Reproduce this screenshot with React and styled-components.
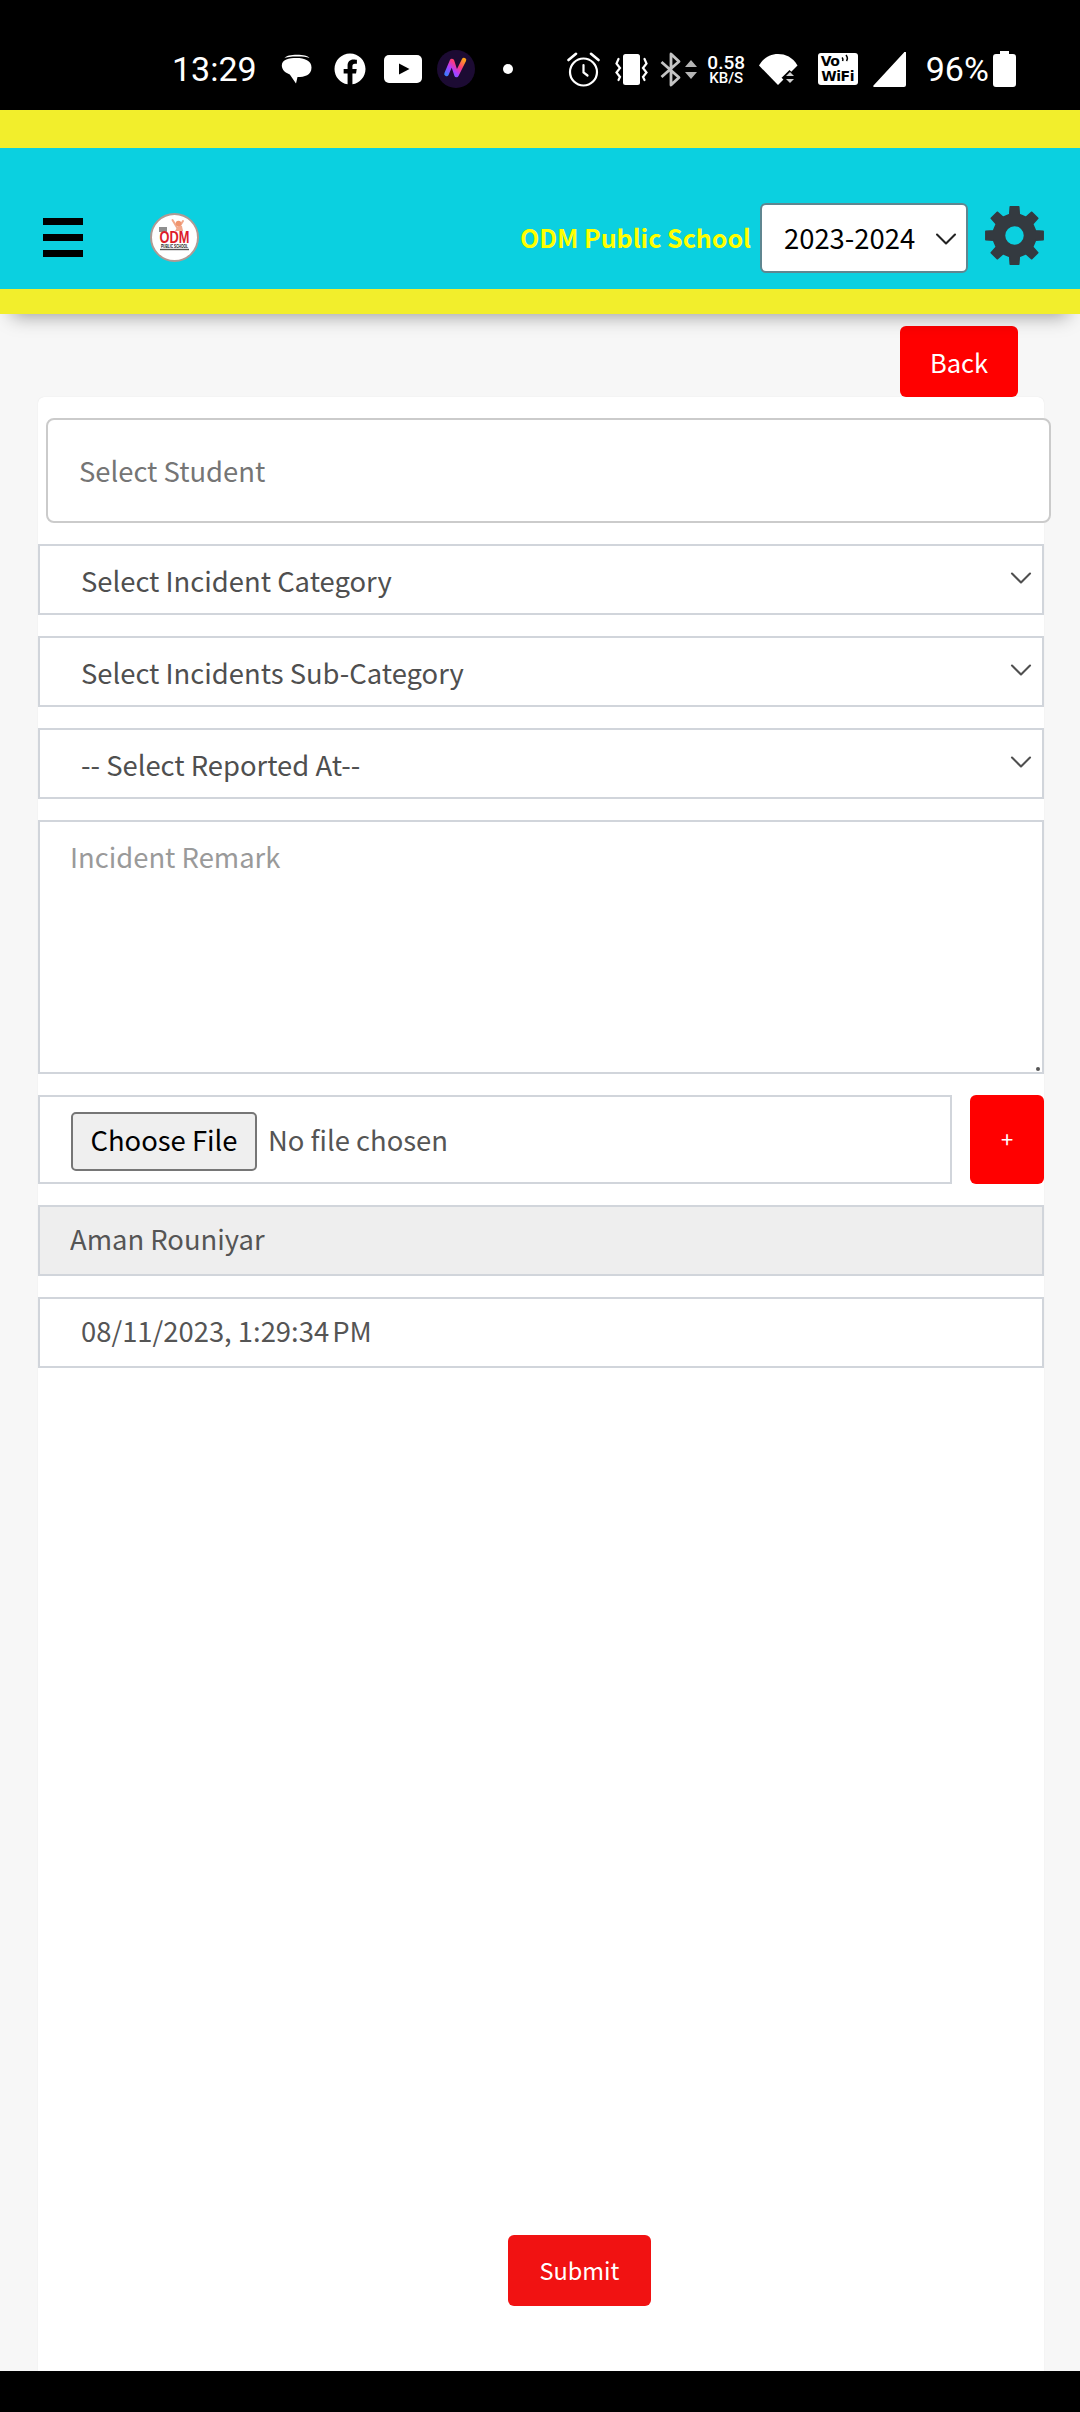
import styled, { createGlobalStyle } from "styled-components";
import { FaFacebook } from "react-icons/fa";

const Global = createGlobalStyle`
    html, body {
        margin: 0;
        padding: 0;
        background: #f7f7f7;
    }
    * {
        box-sizing: border-box;
    }
`;

const UI_FONT = `"Noto Sans CJK SC", "Noto Sans", sans-serif`;

const Screen = styled.div`
    width: 1080px;
    height: 2412px;
    display: flex;
    flex-direction: column;
    overflow: hidden;
    font-family: ${UI_FONT};
`;

// android status bar
const StatusBar = styled.div`
    height: 110px;
    flex: none;
    background: #000;
    color: #fff;
    display: flex;
    align-items: center;
    padding: 30px 0 2px 172px;
    font-family: Roboto, sans-serif;
`;
const StatusText = styled.span`
    font-size: 34px;
    line-height: 40px;
    margin-left: ${p => p.$ml || 0}px;
`;
const Slot = styled.span`
    display: flex;
    flex: none;
    margin-left: ${p => p.$ml || 0}px;
`;
const Speed = styled.span`
    display: flex;
    flex-direction: column;
    align-items: center;
    width: 41px;
    margin-left: 9px;
    font-weight: 500;
`;
const SpeedValue = styled.span`
    font-size: 19px;
    line-height: 17px;
`;
const SpeedUnit = styled.span`
    font-size: 15px;
    line-height: 14px;
`;
const VoWifi = styled.span`
    width: 40px;
    height: 32px;
    margin-left: 20px;
    flex: none;
    background: #fff;
    border-radius: 3px;
    color: #000;
    font-family: "DejaVu Sans", sans-serif;
    font-weight: 700;
    display: flex;
    flex-direction: column;
    align-items: center;
    font-size: 14px;
    line-height: 15px;
    padding-top: 1px;
    letter-spacing: -0.5px;
`;
const VoLine = styled.span`
    display: flex;
    align-items: flex-start;
    gap: 2px;
    width: 100%;
    padding-left: 3px;
`;

const TopStripe = styled.div`
    height: 38px;
    flex: none;
    background: #f2ee2c;
`;
const HeaderWrap = styled.div`
    flex: none;
    position: relative;
    z-index: 2;
    box-shadow: 0 14px 18px -12px rgba(0, 0, 0, 0.38);
`;
const Header = styled.header`
    height: 141px;
    background: #0bd0e0;
    display: flex;
    align-items: center;
    padding: 38px 35px 0 43px;
`;
const BottomStripe = styled.div`
    height: 25px;
    background: #f2ee2c;
`;
const Burger = styled.div`
    width: 40px;
    display: flex;
    flex-direction: column;
    gap: 9px;
`;
const BurgerBar = styled.span`
    height: 7px;
    background: #000;
`;
const LogoBox = styled.div`
    width: 49px;
    height: 49px;
    margin-left: 67px;
    flex: none;
`;
const SchoolName = styled.span`
    margin: 0 0 2px auto;
    color: #ffff00;
    font-size: 25px;
    line-height: 36px;
    font-weight: 700;
    white-space: nowrap;
`;
const YearWrap = styled.div`
    position: relative;
    width: 208px;
    height: 70px;
    margin-left: 9px;
    flex: none;
`;
const YearSelect = styled.select`
    appearance: none;
    width: 100%;
    height: 100%;
    background: #fff;
    border: 2px solid #5f8690;
    border-radius: 6px;
    padding: 0 0 2px 22px;
    color: #000;
    font-family: ${UI_FONT};
    font-size: 27.4px;
`;
const GearBox = styled.span`
    display: flex;
    margin-left: 16px;
    margin-top: -4px;
`;

const Main = styled.main`
    flex: 1;
    min-height: 0;
    display: flex;
    flex-direction: column;
`;
const BackRow = styled.div`
    display: flex;
    justify-content: flex-end;
    padding: 12px 62px 0 0;
`;
const RedButton = styled.button`
    border: 0;
    background: ${p => p.$bg || "#ff0000"};
    color: #fff;
    border-radius: 6px;
    font-family: ${UI_FONT};
    font-size: ${p => p.$size || 26}px;
    padding: 0 0 ${p => p.$lift || 0}px;
    width: ${p => p.$w}px;
    height: ${p => p.$h}px;
    flex: none;
`;
const Card = styled.section`
    flex: 1;
    width: 1006px;
    margin-left: 38px;
    background: #fff;
    border-radius: 6px 6px 0 0;
    padding: 21px 0 65px;
    display: flex;
    flex-direction: column;
    gap: 21px;
    box-shadow: 0 0 1px rgba(0, 0, 0, 0.12);
`;
const StudentInput = styled.input`
    display: block;
    width: 1005px;
    height: 105px;
    margin-left: 8px;
    flex: none;
    border: 2px solid #cbcbcb;
    border-radius: 8px;
    padding: 0 0 2px 31px;
    font-family: ${UI_FONT};
    font-size: 27.4px;
    background: #fff;
    &::placeholder {
        color: #757575;
        opacity: 1;
    }
`;
const SelectWrap = styled.div`
    position: relative;
    height: 71px;
    flex: none;
`;
const FieldSelect = styled.select`
    appearance: none;
    width: 100%;
    height: 100%;
    border: 2px solid #d1d5db;
    border-radius: 0;
    background: #fff;
    color: #4f4f4f;
    padding: 0 0 0 41px;
    font-family: ${UI_FONT};
    font-size: 27.4px;
`;
const Chevron = styled.svg`
    position: absolute;
    right: ${p => p.$right}px;
    top: ${p => p.$top}px;
    pointer-events: none;
`;
const RemarkWrap = styled.div`
    position: relative;
    height: 254px;
    flex: none;
`;
const RemarkBox = styled.textarea`
    display: block;
    width: 100%;
    height: 100%;
    border: 2px solid #d1d5db;
    border-radius: 0;
    padding: 14px 30px;
    font-family: ${UI_FONT};
    font-size: 27.4px;
    line-height: 40px;
    resize: none;
    &::placeholder {
        color: #9a9a9a;
        opacity: 1;
    }
`;
const ResizeMark = styled.span`
    position: absolute;
    right: 4px;
    bottom: 3px;
    width: 4px;
    height: 4px;
    border-radius: 50%;
    background: #555;
`;
const FileRow = styled.div`
    display: flex;
    justify-content: space-between;
    flex: none;
`;
const FileInput = styled.input`
    width: 914px;
    height: 89px;
    border: 2px solid #d1d5db;
    padding: 15px 31px;
    color: #555;
    font-family: ${UI_FONT};
    font-size: 27.4px;
    background: #fff;
    &::file-selector-button {
        width: 186px;
        height: 59px;
        margin-right: 11px;
        padding: 0 0 5px;
        border: 2px solid #767676;
        border-radius: 5px;
        background: #efefef;
        color: #000;
        font-family: ${UI_FONT};
        font-size: 27.4px;
    }
`;
const TextField = styled.input`
    display: block;
    height: 71px;
    flex: none;
    border: 2px solid #d1d5db;
    border-radius: 0;
    padding: 0 0 5px ${p => p.$pad}px;
    color: #555;
    background: ${p => p.$bg || "#fff"};
    font-family: ${UI_FONT};
    font-size: 27.4px;
`;
const SubmitRow = styled.div`
    margin-top: auto;
    padding-left: 470px;
`;
const NavBar = styled.div`
    height: 41px;
    flex: none;
    background: #000;
`;

const selects = ["Select Incident Category", "Select Incidents Sub-Category", "-- Select Reported At--"];

const ChevronIcon = ({ right, top, size = 24, color = "#4f4f4f" }) => (
    <Chevron $right={right} $top={top} width={size} height={size} viewBox="0 0 16 16" fill="none">
        <path d="M2 5l6 6 6-6" stroke={color} strokeWidth="1.4" strokeLinecap="round" strokeLinejoin="round" />
    </Chevron>
);

const Logo = () => (
    <svg width="49" height="49" viewBox="0 0 49 49">
        <circle cx="24.5" cy="24.5" r="23.5" fill="#fff" stroke="#b09a94" strokeWidth="2" />
        <path d="M22.500 7 L28 16 L33 8" fill="none" stroke="#f2a98c" strokeWidth="2" strokeLinecap="round" />
        <circle cx="28.500" cy="10.500" r="2.800" fill="#f0956f" />
        <path d="M25 18 L28 13 L32 13 L33 18 Z" fill="#f2a98c" />
        <rect x="9" y="14" width="8" height="5" fill="#8f8f8f" />
        <g transform="translate(24.5 29.500) scale(0.8 1)">
            <text textAnchor="middle" fontFamily="'Liberation Sans', sans-serif" fontWeight="700" fontSize="16" fill="#dd1c2a">ODM</text>
        </g>
        <g transform="translate(24.5 34.500) scale(0.66 1)">
            <text textAnchor="middle" fontFamily="'Liberation Sans', sans-serif" fontWeight="700" fontSize="5" fill="#111">PUBLIC SCHOOL</text>
        </g>
        <rect x="10" y="35.800" width="29" height="1.400" fill="#555" />
    </svg>
);

// gear with 8 flat teeth, points worked out instead of typed by hand
const gearPath = () => {
    const pt = (r, deg) => {
        const a = (deg - 90) * Math.PI / 180;
        return `${(30.5 + r * Math.cos(a)).toFixed(2)} ${(30.5 + r * Math.sin(a)).toFixed(2)}`;
    };
    let d = "";
    for (let i = 0; i < 8; i++) {
        const c = i * 45;
        d += `${i === 0 ? "M" : "L"}${pt(21.5, c - 13)} L${pt(29, c - 8.5)} L${pt(29, c + 8.5)} L${pt(21.5, c + 13)} `;
    }
    return d + "Z M30.5 20.500 A10 10 0 1 0 30.500 40.500 A10 10 0 1 0 30.500 20.500 Z";
};
const GearIcon = () => (
    <svg width="61" height="61" viewBox="0 0 61 61">
        <path d={gearPath()} fill="#343a40" fillRule="evenodd" stroke="#343a40" strokeWidth="1.500" strokeLinejoin="round" />
    </svg>
);

const BubbleIcon = () => (
    <svg width="31" height="30" viewBox="0 0 31 30">
        <path d="M3 5C5 1.5 10 .8 16 .8c6 0 11 .8 12.5 3.2C25 2.600 20 2.500 14 2.600 8 2.700 4 3.400 3 5Z" fill="#fff" />
        <path d="M15.500 4C8 4 .8 5.500.8 11.500c0 4.500 4 7.500 8 9L15 29.500 16.500 23c7 0 14-1.500 14-9.500 0-7-7-9.500-15-9.500Z" fill="#fff" />
    </svg>
);
const YoutubeIcon = () => (
    <svg width="38" height="28" viewBox="0 0 38 28">
        <rect width="38" height="28" rx="5" fill="#fff" />
        <path d="M15 8.500v11L25.500 14Z" fill="#000" />
    </svg>
);
const NovaIcon = () => (
    <svg width="38" height="38" viewBox="0 0 38 38">
        <defs>
            <linearGradient id="nGrad" x1="0" y1="1" x2="1" y2="0">
                <stop offset="0" stopColor="#3b7bff" />
                <stop offset="0.35" stopColor="#b13cff" />
                <stop offset="0.65" stopColor="#ff3a7a" />
                <stop offset="1" stopColor="#ffa11a" />
            </linearGradient>
        </defs>
        <circle cx="19" cy="19" r="19" fill="#1c0b33" />
        <path d="M9.500 24 L15 11 L19.500 25 L27 10" fill="none" stroke="url(#nGrad)" strokeWidth="4.500" strokeLinecap="round" strokeLinejoin="round" />
    </svg>
);
const AlarmIcon = () => (
    <svg width="33" height="35" viewBox="0 0 33 35" fill="none" stroke="#fff" strokeWidth="2.200" strokeLinecap="round">
        <circle cx="16.500" cy="20" r="13.500" />
        <path d="M1.500 8 L9 1.800 M31.500 8 L24 1.800" strokeWidth="2.600" />
        <path d="M16.500 13 V20.500 L20.500 23.500" />
    </svg>
);
const VibrateIcon = () => (
    <svg width="33" height="31" viewBox="0 0 33 31" fill="none" stroke="#fff" strokeWidth="2.200" strokeLinecap="round">
        <rect x="8" y="0" width="17" height="31" rx="2.500" fill="#fff" stroke="none" />
        <path d="M3.500 5 L1.500 9.500 L5 14 L1.500 18.500 L5 23 L3.500 26" />
        <path d="M29.500 5 L31.500 9.500 L28 14 L31.500 18.500 L28 23 L29.500 26" />
    </svg>
);
const BluetoothIcon = () => (
    <svg width="37" height="35" viewBox="0 0 37 35">
        <path d="M1.500 10 L19 25.500 L11 33 V2 L19 9.500 L1.500 25" fill="none" stroke="#c4c4c4" strokeWidth="2.800" strokeLinejoin="round" />
        <path d="M25 15 L31 8 L37 15 Z M25 20 H37 L31 27 Z" fill="#b5b5b5" />
    </svg>
);
const WifiIcon = () => (
    <svg width="39" height="31" viewBox="0 0 39 31">
        <path d="M0 11.500 C5 3 11.500 0 19 0 C26.500 0 33.500 3 38.500 11.500 L19 31 Z" fill="#fff" />
        <path d="M26 22.500 L30.500 18 L35 22.500 Z M26 25 H35 L30.500 29.500 Z" fill="#000" stroke="#000" strokeWidth="3" />
        <path d="M27 22 L31 18 L35 22 Z M27 25 H35 L31 29 Z" fill="#d0d0d0" />
    </svg>
);
const SignalIcon = () => (
    <svg width="33" height="35" viewBox="0 0 33 35">
        <path d="M33 1 V33 A2 2 0 0 1 31 35 H1 A1 1 0 0 1 .5 33.500 L31 .5 A1 1 0 0 1 33 1 Z" fill="#fff" />
    </svg>
);
const BatteryIcon = () => (
    <svg width="23" height="36" viewBox="0 0 23 36">
        <path d="M7 0 H16 V3 H20 A3 3 0 0 1 23 6 V33 A3 3 0 0 1 20 36 H3 A3 3 0 0 1 0 33 V6 A3 3 0 0 1 3 3 H7 Z" fill="#fff" />
    </svg>
);

export default function App() {
    return (
        <Screen>
            <Global />
            <StatusBar>
                <StatusText>13:29</StatusText>
                <Slot $ml={24}><BubbleIcon /></Slot>
                <Slot $ml={22}><FaFacebook size={32} /></Slot>
                <Slot $ml={18}><YoutubeIcon /></Slot>
                <Slot $ml={15}><NovaIcon /></Slot>
                <Slot $ml={28}>
                    <svg width="10" height="10" viewBox="0 0 10 10"><circle cx="5" cy="5" r="5" fill="#fff" /></svg>
                </Slot>
                <Slot $ml={54}><AlarmIcon /></Slot>
                <Slot $ml={15}><VibrateIcon /></Slot>
                <Slot $ml={12}><BluetoothIcon /></Slot>
                <Speed>
                    <SpeedValue>0.58</SpeedValue>
                    <SpeedUnit>KB/S</SpeedUnit>
                </Speed>
                <Slot $ml={12}><WifiIcon /></Slot>
                <VoWifi>
                    <VoLine>
                        <span>Vo</span>
                        <svg width="8" height="8" viewBox="0 0 8 8" fill="none" stroke="#000" strokeWidth="1.500">
                            <path d="M1 3.500 Q2.500 5 1.500 7 M5 1 Q7.500 4 5.500 7" />
                        </svg>
                    </VoLine>
                    <span>WiFi</span>
                </VoWifi>
                <Slot $ml={15}><SignalIcon /></Slot>
                <StatusText $ml={20}>96%</StatusText>
                <Slot $ml={4}><BatteryIcon /></Slot>
            </StatusBar>
            <TopStripe />
            <HeaderWrap>
                <Header>
                    <Burger>
                        <BurgerBar />
                        <BurgerBar />
                        <BurgerBar />
                    </Burger>
                    <LogoBox><Logo /></LogoBox>
                    <SchoolName>ODM Public School</SchoolName>
                    <YearWrap>
                        <YearSelect defaultValue="2023-2024">
                            <option>2023-2024</option>
                        </YearSelect>
                        <ChevronIcon right={10} top={24} color="#222" />
                    </YearWrap>
                    <GearBox><GearIcon /></GearBox>
                </Header>
                <BottomStripe />
            </HeaderWrap>
            <Main>
                <BackRow>
                    <RedButton $w={118} $h={71} $size={25.5}>Back</RedButton>
                </BackRow>
                <Card>
                    <StudentInput placeholder="Select Student" />
                    {selects.map(label => (
                        <SelectWrap key={label}>
                            <FieldSelect defaultValue={label}>
                                <option>{label}</option>
                            </FieldSelect>
                            <ChevronIcon right={11} top={22} />
                        </SelectWrap>
                    ))}
                    <RemarkWrap>
                        <RemarkBox placeholder="Incident Remark" />
                        <ResizeMark />
                    </RemarkWrap>
                    <FileRow>
                        <FileInput type="file" />
                        <RedButton $w={74} $h={89} $size={22} $lift={3}>+</RedButton>
                    </FileRow>
                    <TextField $pad={30} $bg="#eeeeee" readOnly value="Aman Rouniyar" />
                    <TextField $pad={41} readOnly value={"08/11/2023, 1:29:34\u202fPM"} />
                    <SubmitRow>
                        <RedButton $w={143} $h={71} $size={23.5} $lift={2} $bg="#f11212">Submit</RedButton>
                    </SubmitRow>
                </Card>
            </Main>
            <NavBar />
        </Screen>
    );
}
